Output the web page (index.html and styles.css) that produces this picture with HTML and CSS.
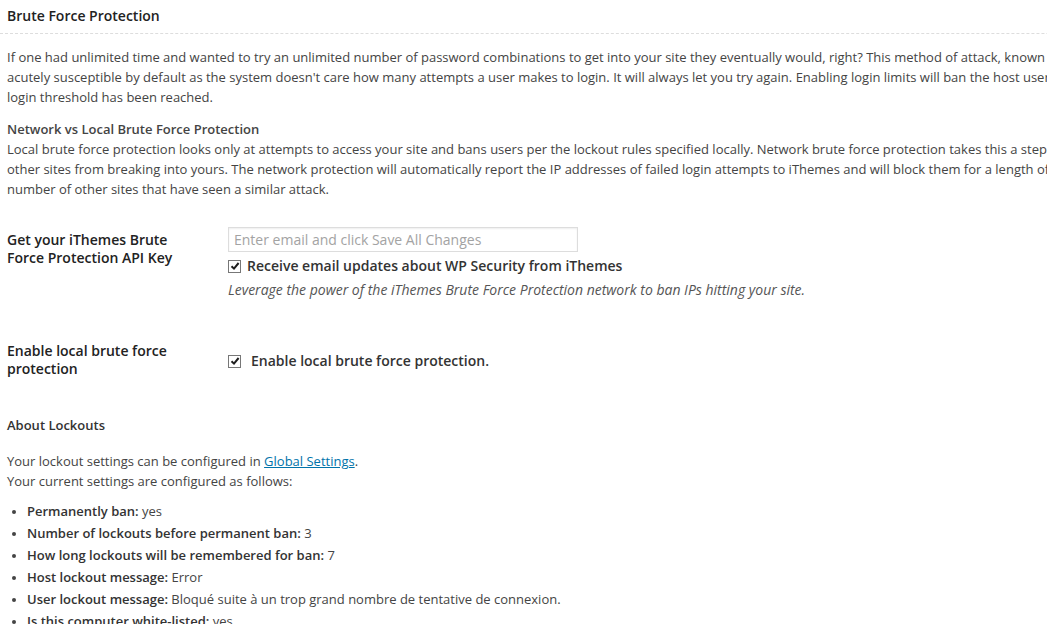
FILE: index.html
```html
<!DOCTYPE html>
<html lang="en">
<head>
    <meta charset="UTF-8">
    <title>Brute Force Protection</title>
    <link rel="stylesheet" href="styles.css">
</head>
<body>

    <div class="postbox">
        <h3 class="box-title">Brute Force Protection</h3>

        <div class="inside">
            <p class="intro">If one had unlimited time and wanted to try an unlimited number of password combinations to get into your site they eventually would, right? This method of attack, known as a brute force attack, is something that WordPress is<br>
            acutely susceptible by default as the system doesn't care how many attempts a user makes to login. It will always let you try again. Enabling login limits will ban the host user from attempting to login again after the specified bad<br>
            login threshold has been reached.</p>

            <p class="intro"><strong>Network vs Local Brute Force Protection</strong><br>
            Local brute force protection looks only at attempts to access your site and bans users per the lockout rules specified locally. Network brute force protection takes this a step further by banning users who have tried to break into<br>
            other sites from breaking into yours. The network protection will automatically report the IP addresses of failed login attempts to iThemes and will block them for a length of time necessary to protect your site based on the<br>
            number of other sites that have seen a similar attack.</p>

            <!-- Settings rows -->
            <div class="row row-api">
                <label class="row-label" for="api-email">Get your iThemes Brute Force Protection API Key</label>
                <div class="row-field">
                    <input type="text" id="api-email" class="text-input" placeholder="Enter email and click Save All Changes">
                    <label class="check-line">
                        <span class="check"><svg width="10" height="10" viewBox="0 0 10 10"><path d="M1.5 5.2 L4 7.6 L8.6 2" fill="none" stroke="#1e1e1e" stroke-width="2"/></svg></span>
                        Receive email updates about WP Security from iThemes
                    </label>
                    <p class="description">Leverage the power of the iThemes Brute Force Protection network to ban IPs hitting your site.</p>
                </div>
            </div>

            <div class="row row-local">
                <label class="row-label">Enable local brute force protection</label>
                <div class="row-field">
                    <label class="check-line wide">
                        <span class="check"><svg width="10" height="10" viewBox="0 0 10 10"><path d="M1.5 5.2 L4 7.6 L8.6 2" fill="none" stroke="#1e1e1e" stroke-width="2"/></svg></span>
                        Enable local brute force protection.
                    </label>
                </div>
            </div>

            <h4 class="sub-title">About Lockouts</h4>
            <p class="lockout-text">Your lockout settings can be configured in <a href="#">Global Settings</a>.<br>
            Your current settings are configured as follows:</p>

            <ul class="settings-list">
                <li><strong>Permanently ban:</strong> yes</li>
                <li><strong>Number of lockouts before permanent ban:</strong> 3</li>
                <li><strong>How long lockouts will be remembered for ban:</strong> 7</li>
                <li><strong>Host lockout message:</strong> Error</li>
                <li><strong>User lockout message:</strong> Bloqué suite à un trop grand nombre de tentative de connexion.</li>
                <li><strong>Is this computer white-listed:</strong> yes</li>
            </ul>
        </div>
    </div>

</body>
</html>
```

FILE: styles.css
```css
body {
    font-family: "Open Sans", sans-serif;
    font-size: 13px;
    color: #444;
    background-color: #fff;
    margin: 0;
    overflow: hidden;
}

.postbox {
    width: 1440px;
}

/* Box header with the dotted rule */
.box-title {
    margin: 0;
    padding: 6px 7px 7px;
    font-size: 14px;
    font-weight: 600;
    line-height: 20px;
    color: #222;
    border-bottom: 1px dashed #ddd;
}

.inside {
    padding: 0 7px;
}

.intro {
    margin: 13px 0 0;
    line-height: 20px;
    white-space: nowrap; /* lines break where the original screen broke them */
}

.intro + .intro {
    margin-top: 12px;
}

.intro strong {
    font-weight: 600;
}

/* Settings rows */
.row {
    display: flex;
}

.row-label {
    width: 221px;
    flex: none;
    font-size: 14px;
    font-weight: 600;
    line-height: 18px;
    color: #222;
    box-sizing: border-box;
    padding-right: 30px;
}

.row-api {
    margin-top: 28px;
}

.row-api .row-label {
    padding-top: 4px;
}

.row-local {
    margin-top: 42px;
}

.row-local .row-field {
    padding-top: 10px;
}

.text-input {
    display: block;
    width: 350px;
    height: 25px;
    margin: 0;
    padding: 0 5px;
    box-sizing: border-box;
    border: 1px solid #ddd;
    box-shadow: inset 0 1px 2px rgba(0, 0, 0, 0.07);
    font-family: "Open Sans", sans-serif;
    font-size: 14px;
    color: #333;
}

.text-input::placeholder {
    color: #a3a3a3;
}

.check-line {
    display: flex;
    align-items: center;
    gap: 6px;
    margin-top: 5px;
    font-size: 14px;
    font-weight: 600;
    line-height: 18px;
    color: #333;
}

.check-line.wide {
    gap: 10px;
    margin-top: 0;
}

.check {
    width: 11px;
    height: 11px;
    border: 1px solid #777;
    background-color: #fff;
    display: flex;
    align-items: center;
    justify-content: center;
}

.description {
    margin: 5px 0 0;
    font-size: 14px;
    font-style: italic;
    line-height: 20px;
    color: #555;
}

/* Lockout info */
.sub-title {
    margin: 37px 0 0;
    font-size: 13px;
    font-weight: 600;
    line-height: 20px;
    color: #333;
}

.lockout-text {
    margin: 16px 0 0;
    line-height: 20px;
}

.lockout-text a {
    color: #0073aa;
}

.settings-list {
    margin: 9px 0 0;
    padding-left: 20px;
    line-height: 22px;
}

.settings-list li::marker {
    font-size: 11px;
}

.settings-list strong {
    font-weight: 600;
    color: #333;
}
```
